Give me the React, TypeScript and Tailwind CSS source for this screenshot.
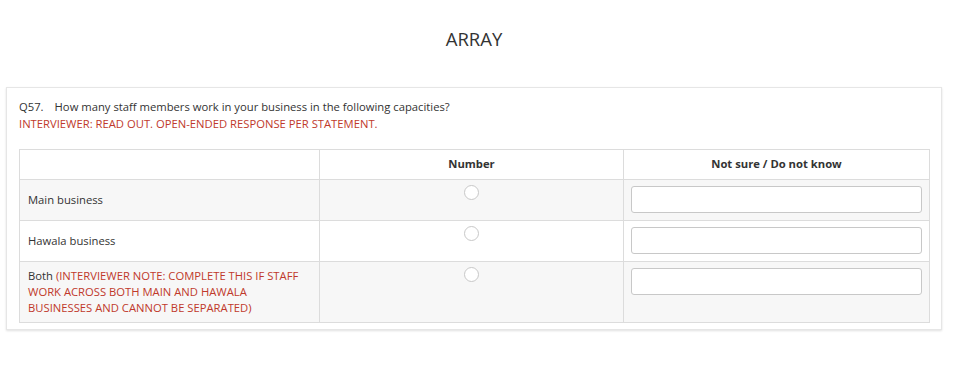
import React from 'react';

const rows = [
  { label: 'Main business', note: '', bg: 'bg-[#f7f7f7]', h: 'h-[41px]' },
  { label: 'Hawala business', note: '', bg: 'bg-white', h: 'h-[41px]' },
  {
    label: 'Both ',
    note: '(INTERVIEWER NOTE: COMPLETE THIS IF STAFF WORK ACROSS BOTH MAIN AND HAWALA BUSINESSES AND CANNOT BE SEPARATED)',
    bg: 'bg-[#f7f7f7]',
    h: 'h-[61px]',
  },
];

const App: React.FC = () => {
  return (
    <div className="w-[955px] min-h-[374px] bg-white font-['Open_Sans',sans-serif] text-[#333]">
      <h1 className="w-[948px] pt-[27px] h-[87px] text-center text-[18.5px] leading-[24px] text-[#333]">ARRAY</h1>

      <div className="ml-[6px] w-[936px] border border-[#e6e6e6] shadow-[0_1px_2px_rgba(0,0,0,0.12)] px-[12px] pt-[10px] pb-[6px]">
        <div className="text-[11.25px] leading-[17px]">
          <p className="whitespace-nowrap">
            Q57.<span className="ml-[11px]">How many staff members work in your business in the following capacities?</span>
          </p>
          <p className="text-[#c0392b] whitespace-nowrap">INTERVIEWER: READ OUT. OPEN-ENDED RESPONSE PER STATEMENT.</p>
        </div>

        <table className="mt-[17px] w-[910px] border-collapse text-[11.25px] table-fixed">
          <colgroup>
            <col className="w-[300px]" />
            <col className="w-[304px]" />
            <col className="w-[306px]" />
          </colgroup>
          <thead>
            <tr className="h-[30px] bg-white">
              <th className="border border-[#dcdcdc]"></th>
              <th className="border border-[#dcdcdc] font-bold text-center">Number</th>
              <th className="border border-[#dcdcdc] font-bold text-center">Not sure / Do not know</th>
            </tr>
          </thead>
          <tbody>
            {rows.map((r) => (
              <tr key={r.label} className={`${r.bg} ${r.h}`}>
                <td className="border border-[#dcdcdc] px-[8px] py-[4px] leading-[16px] align-middle">
                  {r.label}
                  {r.note && <span className="text-[#c0392b]">{r.note}</span>}
                </td>
                <td className="border border-[#dcdcdc] align-top text-center pt-[5px]">
                  <span className="inline-block w-[15px] h-[15px] rounded-full border border-[#c8c8c8] bg-white"></span>
                </td>
                <td className="border border-[#dcdcdc] align-top px-[7px] pt-[6px]">
                  <input type="text" className="block w-full h-[27px] rounded-[3px] border border-[#c8c8c8] bg-white" />
                </td>
              </tr>
            ))}
          </tbody>
        </table>
      </div>
    </div>
  );
};

export default App;
